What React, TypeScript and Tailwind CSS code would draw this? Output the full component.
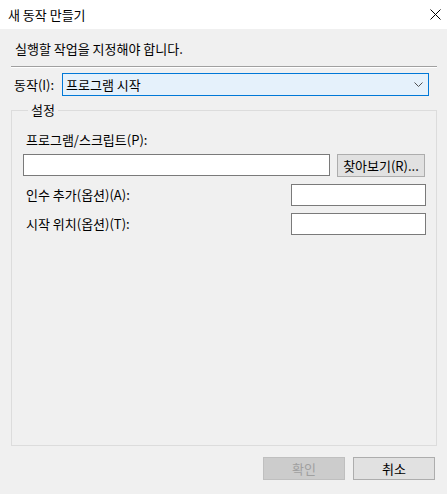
import React from "react";

const font = { fontFamily: '"Noto Sans CJK KR", "Noto Sans", sans-serif' };

function CloseIcon() {
  return (
    <svg width="11" height="11" viewBox="0 0 11 11" className="block">
      <path d="M0.5 0.5 L10.5 10.5 M10.5 0.5 L0.5 10.5" stroke="#000" strokeWidth="1" fill="none" />
    </svg>
  );
}

function Chevron() {
  return (
    <svg width="9" height="5" viewBox="0 0 9 5" className="block">
      <path d="M0.5 0.5 L4.5 4.5 L8.5 0.5" stroke="#505050" strokeWidth="1" fill="none" />
    </svg>
  );
}

export default function App() {
  return (
    <div
      className="flex h-[494px] w-[447px] flex-col overflow-hidden text-[13px] text-black"
      style={font}
    >
      <div className="flex h-[29px] shrink-0 items-center justify-between bg-white pr-[6px] pl-[8px]">
        <span className="leading-[16px]">새 동작 만들기</span>
        <CloseIcon />
      </div>
      <div className="flex flex-1 flex-col bg-[#f0f0f0]">
        <p className="mt-[12px] ml-[15px] h-[16px] leading-[16px]">실행할 작업을 지정해야 합니다.</p>
        <div className="mt-[9px] mr-[10px] ml-[11px] border-t border-b border-t-[#a0a0a0] border-b-white" />
        <div className="mt-[5px] flex h-[23px] items-center">
          <span className="ml-[14px] w-[48px] leading-[16px]">동작(I):</span>
          <div className="flex h-[23px] w-[367px] items-center justify-between border border-[#0078d7] bg-[#e5f1fb] pr-[5px] pl-[3px]">
            <span className="leading-[16px]">프로그램 시작</span>
            <Chevron />
          </div>
        </div>
        <fieldset className="mt-[6px] mr-[10px] ml-[11px] h-[344px] border border-[#dcdcdc] pr-[10px] pl-[11px]">
          <legend className="ml-[5px] px-[3px] leading-[16px]">설정</legend>
          <p className="mt-[14px] ml-[3px] h-[16px] leading-[16px]">프로그램/스크립트(P):</p>
          <div className="mt-[6px] flex items-start gap-[7px]">
            <div className="h-[22px] w-[307px] border border-[#7a7a7a] bg-white" />
            <button className="h-[23px] w-[88px] border border-[#adadad] bg-[#e1e1e1] leading-[16px]">
              찾아보기(R)...
            </button>
          </div>
          <div className="mt-[7px] flex h-[22px] items-center justify-between">
            <span className="ml-[3px] leading-[16px]">인수 추가(옵션)(A):</span>
            <div className="h-[22px] w-[135px] border border-[#7a7a7a] bg-white" />
          </div>
          <div className="mt-[7px] flex h-[22px] items-center justify-between">
            <span className="ml-[3px] leading-[16px]">시작 위치(옵션)(T):</span>
            <div className="h-[22px] w-[135px] border border-[#7a7a7a] bg-white" />
          </div>
        </fieldset>
        <div className="mt-[11px] mr-[12px] flex justify-end gap-[8px]">
          <button className="h-[23px] w-[82px] border border-[#bfbfbf] bg-[#cccccc] leading-[16px] text-[#a0a0a0]">
            확인
          </button>
          <button className="h-[23px] w-[82px] border border-[#adadad] bg-[#e1e1e1] leading-[16px]">
            취소
          </button>
        </div>
      </div>
    </div>
  );
}
